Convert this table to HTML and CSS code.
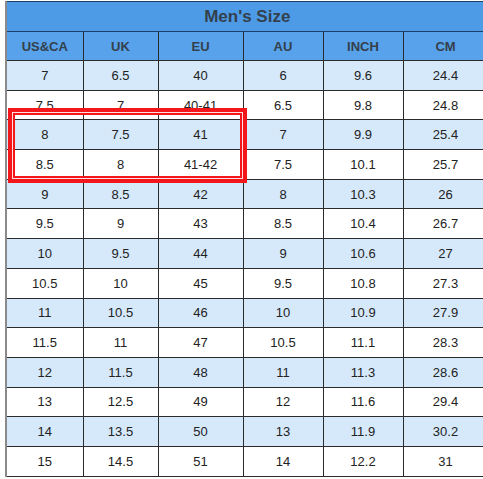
FILE: index.html
```html
<!DOCTYPE html>
<html>
<head>
<meta charset="utf-8">
<link rel="stylesheet" href="styles.css">
</head>
<body>
<div class="wrap">
  <table class="size">
    <colgroup>
      <col class="c1"><col class="c2"><col class="c3"><col class="c4"><col class="c5"><col class="c6">
    </colgroup>
    <tr class="title"><th colspan="6">Men's Size</th></tr>
    <tr class="head"><th>US&amp;CA</th><th>UK</th><th>EU</th><th>AU</th><th>INCH</th><th>CM</th></tr>
    <tr class="alt"><td>7</td><td>6.5</td><td>40</td><td>6</td><td>9.6</td><td>24.4</td></tr>
    <tr><td>7.5</td><td>7</td><td>40-41</td><td>6.5</td><td>9.8</td><td>24.8</td></tr>
    <tr class="alt"><td>8</td><td>7.5</td><td>41</td><td>7</td><td>9.9</td><td>25.4</td></tr>
    <tr><td>8.5</td><td>8</td><td>41-42</td><td>7.5</td><td>10.1</td><td>25.7</td></tr>
    <tr class="alt"><td>9</td><td>8.5</td><td>42</td><td>8</td><td>10.3</td><td>26</td></tr>
    <tr><td>9.5</td><td>9</td><td>43</td><td>8.5</td><td>10.4</td><td>26.7</td></tr>
    <tr class="alt"><td>10</td><td>9.5</td><td>44</td><td>9</td><td>10.6</td><td>27</td></tr>
    <tr><td>10.5</td><td>10</td><td>45</td><td>9.5</td><td>10.8</td><td>27.3</td></tr>
    <tr class="alt"><td>11</td><td>10.5</td><td>46</td><td>10</td><td>10.9</td><td>27.9</td></tr>
    <tr><td>11.5</td><td>11</td><td>47</td><td>10.5</td><td>11.1</td><td>28.3</td></tr>
    <tr class="alt"><td>12</td><td>11.5</td><td>48</td><td>11</td><td>11.3</td><td>28.6</td></tr>
    <tr><td>13</td><td>12.5</td><td>49</td><td>12</td><td>11.6</td><td>29.4</td></tr>
    <tr class="alt"><td>14</td><td>13.5</td><td>50</td><td>13</td><td>11.9</td><td>30.2</td></tr>
    <tr><td>15</td><td>14.5</td><td>51</td><td>14</td><td>12.2</td><td>31</td></tr>
  </table>
  <div class="highlight"></div>
</div>
</body>
</html>
```
FILE: styles.css
```css
html, body {
  margin: 0;
  padding: 0;
  background: #fff;
  overflow: hidden;
}
.wrap {
  position: relative;
  margin: 1px 0 0 5px;
  width: 482px;
  border-left: 2px solid #8a8a8a;
}
.size {
  border-collapse: collapse;
  table-layout: fixed;
  width: 481px;
  font-family: "Liberation Sans", Arial, sans-serif;
  color: #222;
}
.c1 { width: 76px; }
.c2 { width: 75px; }
.c3 { width: 85px; }
.c4 { width: 80px; }
.c5 { width: 80px; }
.c6 { width: 85px; }
.size th, .size td {
  border: 1px solid #2b2b2b;
  text-align: center;
  padding: 0;
}
.size td {
  height: 28.7px;
  font-size: 13px;
}
.title th {
  height: 29px;
  background: #4d9be6;
  font-size: 17px;
  font-weight: bold;
  color: #34404c;
  border-color: #1d3e66;
  border-left: none;
}
.head th {
  height: 28px;
  background: #57a2ea;
  font-size: 13px;
  font-weight: bold;
  color: #34404c;
}
.head th:first-child, .size td:first-child {
  border-left: none;
}
.alt td {
  background: #d6e9fb;
}
.highlight {
  position: absolute;
  left: 1px;
  top: 107px;
  width: 231px;
  height: 67px;
  border: 4px solid #f3171b;
  box-shadow: inset 0 0 0 1px #ffdede, inset 0 0 0 3px #f3171b;
  pointer-events: none;
}
```
